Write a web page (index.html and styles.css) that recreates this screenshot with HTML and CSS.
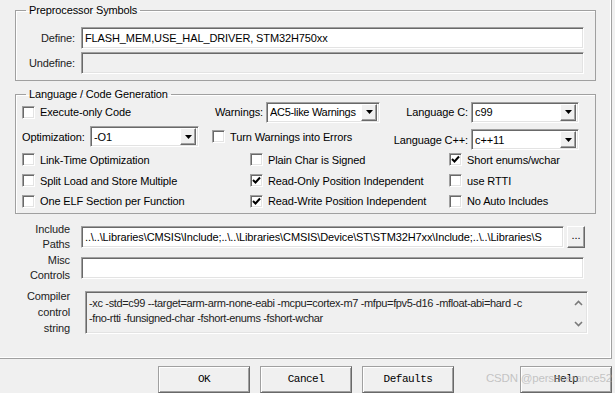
FILE: index.html
```html
<!DOCTYPE html>
<html lang="en">
<head>
  <meta charset="UTF-8">
  <meta name="viewport" content="width=device-width, initial-scale=1.0">
  <link rel="stylesheet" href="styles.css">
  <title>Options for Target - C/C++</title>
</head>
<body>
  <div class="page">
    <fieldset class="group group-pre">
      <legend>Preprocessor Symbols</legend>
      <div class="sym-row">
        <label class="sym-label">Define:</label>
        <div class="field field-define">FLASH_MEM,USE_HAL_DRIVER, STM32H750xx</div>
      </div>
      <div class="sym-row">
        <label class="sym-label">Undefine:</label>
        <div class="field field-define field-off"></div>
      </div>
    </fieldset>

    <fieldset class="group group-lang">
      <legend>Language / Code Generation</legend>
      <div class="lang-row row-1">
        <div class="cell cell-a"><span class="cb"></span>Execute-only Code</div>
        <div class="cell cell-b">
          <span class="lbl">Warnings:</span>
          <div class="select sel-warn"><span class="sel-text">AC5-like Warnings</span><span class="drop"><svg width="7" height="4" viewBox="0 0 7 4"><polygon points="0,0 7,0 3.5,4" fill="#000"/></svg></span></div>
        </div>
        <div class="cell cell-c">
          <span class="lbl">Language C:</span>
          <div class="select sel-lang"><span class="sel-text">c99</span><span class="drop"><svg width="7" height="4" viewBox="0 0 7 4"><polygon points="0,0 7,0 3.5,4" fill="#000"/></svg></span></div>
        </div>
      </div>
      <div class="lang-row row-2">
        <div class="cell cell-a">
          <span class="lbl">Optimization:</span>
          <div class="select sel-opt"><span class="sel-text">-O1</span><span class="drop"><svg width="7" height="4" viewBox="0 0 7 4"><polygon points="0,0 7,0 3.5,4" fill="#000"/></svg></span></div>
        </div>
        <div class="cell cell-b cell-turn"><span class="cb"></span>Turn Warnings into Errors</div>
        <div class="cell cell-c cell-cpp">
          <span class="lbl">Language C++:</span>
          <div class="select sel-lang"><span class="sel-text">c++11</span><span class="drop"><svg width="7" height="4" viewBox="0 0 7 4"><polygon points="0,0 7,0 3.5,4" fill="#000"/></svg></span></div>
        </div>
      </div>
      <div class="lang-row row-opt">
        <div class="cell col-1"><span class="cb"></span>Link-Time Optimization</div>
        <div class="cell col-2"><span class="cb"></span>Plain Char is Signed</div>
        <div class="cell col-3"><span class="cb"><svg width="9" height="9" viewBox="0 0 9 9"><polyline points="1,4 3.5,6.5 8,1.5" fill="none" stroke="#000" stroke-width="2"/></svg></span>Short enums/wchar</div>
      </div>
      <div class="lang-row row-opt">
        <div class="cell col-1"><span class="cb"></span>Split Load and Store Multiple</div>
        <div class="cell col-2"><span class="cb"><svg width="9" height="9" viewBox="0 0 9 9"><polyline points="1,4 3.5,6.5 8,1.5" fill="none" stroke="#000" stroke-width="2"/></svg></span>Read-Only Position Independent</div>
        <div class="cell col-3"><span class="cb"></span>use RTTI</div>
      </div>
      <div class="lang-row row-opt row-last">
        <div class="cell col-1"><span class="cb"></span>One ELF Section per Function</div>
        <div class="cell col-2"><span class="cb"><svg width="9" height="9" viewBox="0 0 9 9"><polyline points="1,4 3.5,6.5 8,1.5" fill="none" stroke="#000" stroke-width="2"/></svg></span>Read-Write Position Independent</div>
        <div class="cell col-3"><span class="cb"></span>No Auto Includes</div>
      </div>
    </fieldset>

    <div class="paths">
      <div class="path-row row-include">
        <label class="path-label">Include<br>Paths</label>
        <div class="field field-include">..\..\Libraries\CMSIS\Include;..\..\Libraries\CMSIS\Device\ST\STM32H7xx\Include;..\..\Libraries\S</div>
        <button class="browse">...</button>
      </div>
      <div class="path-row row-misc">
        <label class="path-label">Misc<br>Controls</label>
        <div class="field field-misc"></div>
      </div>
      <div class="path-row row-ctrl">
        <label class="path-label label-ctrl">Compiler<br>control<br>string</label>
        <div class="field field-ctrl">
          <div class="ctrl-text">-xc -std=c99 --target=arm-arm-none-eabi -mcpu=cortex-m7 -mfpu=fpv5-d16 -mfloat-abi=hard -c<br>-fno-rtti -funsigned-char -fshort-enums -fshort-wchar</div>
          <div class="scroll">
            <svg width="9" height="6" viewBox="0 0 9 6"><polyline points="1,5 4.5,1.5 8,5" fill="none" stroke="#7a7a7a" stroke-width="1.6"/></svg>
            <svg width="9" height="6" viewBox="0 0 9 6"><polyline points="1,1 4.5,4.5 8,1" fill="none" stroke="#7a7a7a" stroke-width="1.6"/></svg>
          </div>
        </div>
      </div>
    </div>
  </div>

  <div class="buttons">
    <button class="btn">OK</button>
    <button class="btn">Cancel</button>
    <button class="btn">Defaults</button>
    <button class="btn btn-help">Help</button>
  </div>
  <div class="watermark">CSDN @perseverance52</div>
</body>
</html>
```

FILE: styles.css
```css
* {
  box-sizing: border-box;
}

body {
  margin: 0;
  padding: 0;
  width: 615px;
  height: 393px;
  overflow: hidden;
  position: relative;
  background-color: #f0f0f0;
  font-family: 'Liberation Sans', Arial, sans-serif;
  font-size: 11px;
  letter-spacing: -0.12px;
  color: #000;
}

.page {
  width: 612px;
  height: 359px;
  padding: 3px 0 0 15px;
  border-right: 1px solid #a0a0a0;
  border-bottom: 1px solid #a0a0a0;
  box-shadow: inset -1px -1px 0 #fff;
}

/* group boxes */
.group {
  width: 581px;
  margin: 0;
  border: 1px solid #a0a0a0;
  box-shadow: inset 1px 1px 0 #fff;
}

.group legend {
  margin-left: 10px;
  padding: 0 3px;
  line-height: 14px;
}

.group-pre {
  padding: 10px 0 6px 0;
}

.group-lang {
  margin-top: 6px;
  padding: 0 0 2px 0;
}

/* sunken fields */
.field {
  height: 22px;
  background-color: #fff;
  border: 1px solid;
  border-color: #a0a0a0 #fff #fff #a0a0a0;
  box-shadow: inset 1px 1px 0 #696969, inset -1px -1px 0 #e3e3e3;
  padding: 0 3px;
  line-height: 20px;
  white-space: nowrap;
  overflow: hidden;
}

.field-off {
  background-color: #f0f0f0;
}

.sym-row {
  display: flex;
  align-items: center;
  margin-bottom: 3px;
}

.sym-row:last-child {
  margin-bottom: 0;
}

.sym-label {
  width: 59px;
  margin-right: 6px;
  text-align: right;
  color: #222;
}

.field-define {
  width: 503px;
}

/* language group */
.lang-row {
  display: flex;
  align-items: center;
}

.row-1 {
  height: 22px;
}

.row-2 {
  height: 25px;
  margin-top: 1px;
}

.row-opt {
  height: 21px;
}

.row-last {
  height: 20px;
}

.cell {
  display: flex;
  align-items: center;
  white-space: nowrap;
}

.cell-a {
  width: 190px;
  padding: 0 7px 0 6px;
}

.cell-b {
  width: 174px;
  justify-content: flex-end;
}

.cell-c {
  width: 199px;
  justify-content: flex-end;
}

.cell-turn {
  justify-content: flex-start;
  padding-left: 6px;
}

.cell-cpp {
  align-self: flex-start;
  margin-top: 5px;
}

.col-1 {
  width: 234px;
  padding-left: 6px;
}

.col-2 {
  width: 199px;
}

.lbl {
  margin-right: 3px;
}

.cb {
  width: 13px;
  height: 13px;
  flex: none;
  margin-right: 5px;
  display: flex;
  align-items: center;
  justify-content: center;
  background-color: #fff;
  border: 1px solid;
  border-color: #a0a0a0 #fff #fff #a0a0a0;
  box-shadow: inset 1px 1px 0 #696969, inset -1px -1px 0 #e3e3e3;
}

.select {
  height: 21px;
  display: flex;
  align-items: center;
  background-color: #fff;
  border: 1px solid;
  border-color: #a0a0a0 #fff #fff #a0a0a0;
  box-shadow: inset 1px 1px 0 #696969, inset -1px -1px 0 #e3e3e3;
  padding: 2px 2px 2px 3px;
}

.sel-text {
  flex: 1;
  white-space: nowrap;
  overflow: hidden;
}

.sel-warn {
  width: 114px;
}

.sel-warn .sel-text {
  letter-spacing: -0.3px;
}

.sel-lang {
  width: 108px;
}

.sel-opt {
  width: 109px;
  margin-left: auto;
}

.drop {
  width: 16px;
  height: 17px;
  flex: none;
  display: flex;
  align-items: center;
  justify-content: center;
  background-color: #f0f0f0;
  border: 1px solid;
  border-color: #fff #696969 #696969 #fff;
  box-shadow: inset -1px -1px 0 #a0a0a0;
}

/* include / misc / control string */
.paths {
  padding-left: 1px;
}

.path-row {
  display: flex;
  align-items: center;
}

.path-label {
  width: 54px;
  text-align: right;
  line-height: 15px;
  color: #222;
}

.row-include {
  margin-top: 8px;
}

.row-misc {
  margin-top: 1px;
}

.row-ctrl {
  margin-top: 5px;
}

.label-ctrl {
  line-height: 16px;
}

.field-include {
  width: 483px;
  margin-left: 11px;
}

.field-misc {
  width: 503px;
  margin-left: 11px;
}

.browse {
  width: 18px;
  height: 22px;
  margin-left: 3px;
  padding: 0 0 4px 0;
  font-family: 'Liberation Sans', Arial, sans-serif;
  font-size: 11px;
  background-color: #f0f0f0;
  border: 1px solid;
  border-color: #fff #696969 #696969 #fff;
  box-shadow: inset -1px -1px 0 #a0a0a0;
}

.field-ctrl {
  width: 503px;
  height: 43px;
  margin-left: 15px;
  display: flex;
  padding: 4px 0 0 3px;
  line-height: 15px;
  background-color: #f0f0f0;
  color: #222;
}

.ctrl-text {
  flex: 1;
  overflow: hidden;
  letter-spacing: -0.35px;
}

.scroll {
  width: 17px;
  display: flex;
  flex-direction: column;
  justify-content: space-between;
  align-items: center;
  padding: 4px 0 6px 0;
}

/* dialog buttons */
.buttons {
  display: flex;
  padding-left: 158px;
  margin-top: 7px;
}

.btn {
  width: 92px;
  height: 27px;
  margin-right: 10px;
  padding: 0 0 2px 0;
  font-family: 'Liberation Mono', 'Courier New', monospace;
  font-size: 11px;
  letter-spacing: -0.5px;
  color: #000;
  background-color: #f0f0f0;
  border: 1px solid;
  border-color: #a0a0a0 #696969 #696969 #a0a0a0;
  box-shadow: inset 1px 1px 0 #fff, inset -1px -1px 0 #a0a0a0;
}

.btn-help {
  margin-left: 56px;
  margin-right: 0;
}

.watermark {
  position: absolute;
  left: 486px;
  top: 372px;
  font-size: 11.5px;
  letter-spacing: -0.2px;
  color: rgba(175, 175, 175, 0.7);
  white-space: nowrap;
}
```
